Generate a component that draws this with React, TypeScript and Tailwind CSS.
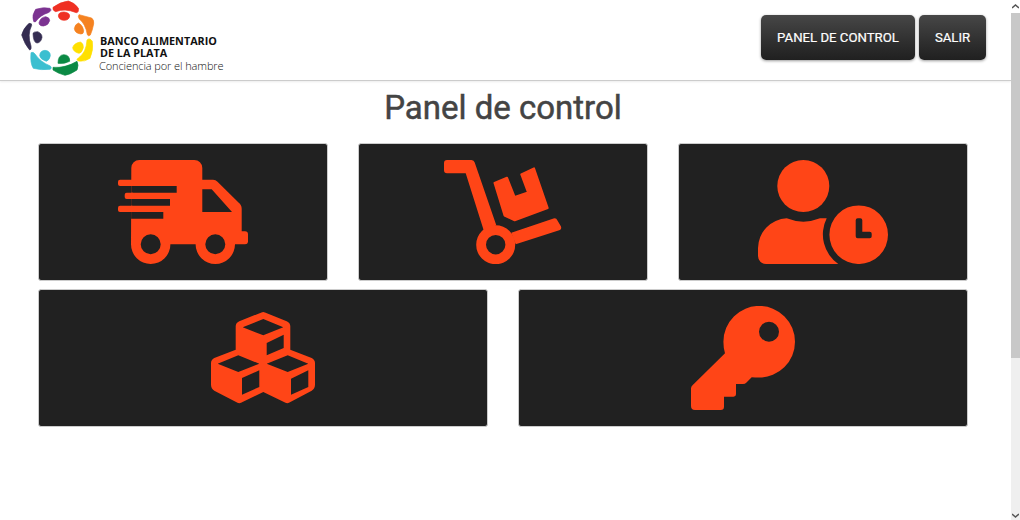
// logotipo: anillo de siete figuras con su punto
const logoShapes = [
  { color: '#ef3023', d: 'M114 22 Q135 6 160 3 Q178 8 190 24 Q192 38 184 38 Q150 24 122 35 Q112 32 114 22Z' },
  { color: '#ef3023', d: 'M130 48 Q130 36 147 36 Q164 38 164 48 Q162 61 147 61 Q132 60 130 48Z' },
  { color: '#f58220', d: 'M192 44 L230 54 Q238 60 236 72 Q232 92 226 105 Q220 110 217 104 Q212 72 192 56 Q188 48 192 44Z' },
  { color: '#f58220', d: 'M178 86 Q180 72 191 69 Q205 78 206 92 Q206 102 198 102 Q180 100 178 86Z' },
  { color: '#ffe000', d: 'M216 120 Q224 112 232 124 Q236 150 225 175 Q210 186 190 183 Q182 178 190 174 Q214 158 216 120Z' },
  { color: '#ffe000', d: 'M173 143 Q176 130 196 126 Q206 130 205 143 Q200 160 192 160 Q175 156 173 143Z' },
  { color: '#0b8a44', d: 'M114 202 Q150 205 186 184 Q192 195 186 210 Q165 224 150 226 Q128 220 114 210Z' },
  { color: '#0b8a44', d: 'M129 190 Q129 165 146 164 Q165 165 164 184 Q147 193 129 190Z' },
  { color: '#3bbfd0', d: 'M48 158 Q55 154 60 162 Q76 186 106 198 Q112 204 106 208 Q76 211 55 205 Q45 190 48 158Z' },
  { color: '#3bbfd0', d: 'M74 167 Q75 152 90 151 Q106 153 106 167 Q104 180 94 184 Q76 178 74 167Z' },
  { color: '#352d52', d: 'M42 70 Q52 70 50 76 Q36 104 48 138 Q50 150 44 150 Q30 135 20 105 Q25 85 42 70Z' },
  { color: '#352d52', d: 'M54 100 Q56 95 68 95 Q81 100 81 112 Q78 128 66 129 Q55 128 54 100Z' },
  { color: '#7c3391', d: 'M55 60 Q50 46 62 28 Q85 20 105 25 Q112 32 100 38 Q76 45 62 65 Q55 68 55 60Z' },
  { color: '#7c3391', d: 'M72 68 Q76 52 92 50 Q104 52 104 62 Q100 76 86 78 Q72 78 72 68Z' },
]

function Logo() {
  return (
    <svg width="85" height="80" viewBox="0 0 255 240" className="shrink-0">
      {logoShapes.map((shape) => (
        <path key={shape.d} fill={shape.color} stroke={shape.color} strokeWidth="2" strokeLinejoin="round" d={shape.d} />
      ))}
    </svg>
  )
}

function TruckIcon() {
  return (
    <svg width="130" height="104" viewBox="0 0 130 104" fill="currentColor">
      <path
        fillRule="evenodd"
        d="M13.3 8a8 8 0 0 1 8-8H76.3a8 8 0 0 1 8 8V19.7H95a6 6 0 0 1 4.5 2L120.5 42.5a8 8 0 0 1 3.2 6.2V71.3H127a3 3 0 0 1 3 3V81a3 3 0 0 1-3 3.3H117A19.7 19.7 0 0 1 77.6 84.3H52.4A19.7 19.7 0 0 1 13 84.3ZM13 26H58.7V32.7H13ZM13 39H52V45.7H13ZM13 52H45.3V58.7H13ZM84.3 29.3H93.7L114 52H84.3ZM42.7 84.3a10 10 0 1 1-20 0a10 10 0 1 1 20 0ZM107.3 84.3a10 10 0 1 1-20 0a10 10 0 1 1 20 0Z"
      />
      <rect x="0" y="19.7" width="16" height="6.3" rx="2" />
      <rect x="6.7" y="32.7" width="10" height="6.3" rx="2" />
      <rect x="0" y="45.7" width="16" height="6.3" rx="2" />
    </svg>
  )
}

function DollyIcon() {
  return (
    <svg width="118" height="104" viewBox="0 0 118 104" fill="currentColor">
      <path d="M3 0H27.5a3.5 3.5 0 0 1 3.2 2.5L52.3 65.3L40 71.3L21.7 13.3H3a3 3 0 0 1-3-3V3a3 3 0 0 1 3-3Z" />
      <path fillRule="evenodd" d="M71.2 84.7a19.5 19.5 0 1 1-39 0a19.5 19.5 0 1 1 39 0ZM61.4 84.7a9.7 9.7 0 1 0-19.4 0a9.7 9.7 0 1 0 19.4 0Z" />
      <path d="M67.3 72.7L109.5 58.5a3 3 0 0 1 3.8 1.8L117 66.5a3 3 0 0 1-1.8 3.8L71.7 84.3Z" />
      <path
        stroke="currentColor"
        strokeWidth="2"
        strokeLinejoin="round"
        d="M50.5 23L63 17.7L70.7 37L84 32.5L77.3 14.3L90 8.3L103.7 48L70.7 60.3L60.5 55.5Z"
      />
    </svg>
  )
}

function UserClockIcon() {
  return (
    <svg width="130" height="104" viewBox="0 0 130 104" fill="currentColor">
      <circle cx="45.3" cy="26" r="26" />
      <path d="M8 104a8 8 0 0 1-8-8V88A30 30 0 0 1 28.7 58.3Q45.3 65 62 58.3H68.7A36 36 0 0 0 80.3 104Z" />
      <path
        fillRule="evenodd"
        d="M130 74.7a29.3 29.3 0 1 1-58.6 0a29.3 29.3 0 1 1 58.6 0ZM99.7 58.3a2 2 0 0 0-2 2V76.3a2 2 0 0 0 2 2H111.7a2 2 0 0 0 2-2V73.7a2 2 0 0 0-2-2H104.3V60.3a2 2 0 0 0-2-2Z"
      />
    </svg>
  )
}

function CubesIcon() {
  return (
    <svg width="104" height="92" viewBox="0 0 104 92" fill="currentColor">
      <path
        fillRule="evenodd"
        d="M50.5 0.4Q52.3 -0.2 54 0.4L75.7 9.3Q79.3 11 79.3 14.3V37.7L100.7 46Q104 48 104 51V72.7Q104 76.5 100.7 78.7L78 90.8Q76.3 91.6 74.5 90.8L52.3 80L30 90.8Q28.3 91.6 26.5 90.8L3.3 78.7Q0 76.5 0 72.7V51Q0 48 3.3 46L24.7 37.7V14.3Q24.7 11 28.3 9.3ZM52.3 7L72.3 15.3L52.3 23.3L31.7 15.3ZM55.7 31L72.7 22.7V36L55.7 43.3ZM27.3 43.3L48.3 51.7L27.3 60L6.7 51.7ZM31 66L48.3 58.3V75L31 82.7ZM76.7 43.3L97.3 51.7L76.7 60L55.7 51.7ZM80 66.7L97.3 58.3V75L80 82.7Z"
      />
    </svg>
  )
}

function KeyIcon() {
  return (
    <svg width="104" height="104" viewBox="0 0 104 104" fill="currentColor">
      <path
        fillRule="evenodd"
        d="M104 35.7a35.8 35.8 0 0 1-35.8 35.8Q64 71.5 60.7 71.3L55.5 76.5Q54 78 52 78H45V88.3Q45 90.7 42.5 90.7H33V100.7Q33 104 29.7 104H4Q0 104 0 100V82.5Q0 80.7 1.5 79.2L34 47.3Q32.4 42 32.4 35.7a35.8 35.8 0 0 1 71.6 0ZM88 25.7a10 10 0 1 0-20 0a10 10 0 1 0 20 0Z"
      />
    </svg>
  )
}

function Card({ children }: { children: React.ReactNode }) {
  return (
    <div className="flex h-[138px] items-center justify-center rounded-[3px] border border-[#ccc] bg-[#212121] text-[#ff4517]">
      {children}
    </div>
  )
}

function NavButton({ label, width }: { label: string; width: string }) {
  return (
    <button
      className={`flex h-[45px] items-center justify-center rounded-[5px] bg-gradient-to-b from-[#474747] to-[#202020] text-[13.2px] font-normal text-white shadow-[0_1px_3px_rgba(0,0,0,0.4)] [-webkit-text-stroke:0.2px_#fff] ${width}`}
    >
      {label}
    </button>
  )
}

export default function App() {
  return (
    <div className="flex h-[520px] w-[1020px] overflow-hidden bg-white font-['Roboto',sans-serif]">
      <div className="w-[1011px]">
        <header className="flex h-[81px] items-start justify-between border-b border-[#ccc] pl-[15px] pr-[25px] shadow-[0_1px_2px_rgba(0,0,0,0.08)]">
          <div className="flex items-start">
            <Logo />
            <div className="mt-[35px] font-['Open_Sans',sans-serif] text-[#111]">
              <p className="text-[10.8px] leading-[12px] font-bold">BANCO ALIMENTARIO</p>
              <p className="text-[10.8px] leading-[12px] font-bold">DE LA PLATA</p>
              <p className="-ml-px text-[11px] leading-[14px] font-light tracking-[-0.1px]">Conciencia por el hambre</p>
            </div>
          </div>
          <nav className="mt-[15px] flex gap-1">
            <NavButton label="PANEL DE CONTROL" width="w-[154px]" />
            <NavButton label="SALIR" width="w-[67px]" />
          </nav>
        </header>

        <main className="ml-[38px] w-[930px]">
          <h1 className="h-[62px] pt-[5px] text-center text-[33px] leading-[44px] font-normal text-[#444] [-webkit-text-stroke:0.5px_#444]">
            Panel de control
          </h1>
          <div className="grid grid-cols-3 gap-x-[30px]">
            <Card><TruckIcon /></Card>
            <Card><DollyIcon /></Card>
            <Card><UserClockIcon /></Card>
          </div>
          <div className="mt-[8px] grid grid-cols-2 gap-x-[30px]">
            <Card><CubesIcon /></Card>
            <Card><KeyIcon /></Card>
          </div>
        </main>
      </div>

      {/* barra de desplazamiento */}
      <div className="flex w-[9px] flex-col items-center bg-[#efefef]">
        <div className="flex h-[358px] w-full flex-col bg-[#c8c8c8]">
          <div className="flex h-[13px] items-center justify-center bg-white">
            <svg width="7" height="5" viewBox="0 0 7 5"><path d="M0 4 L3.5 1 L7 4" fill="none" stroke="#555" strokeWidth="1.5" /></svg>
          </div>
        </div>
        <div className="mt-auto flex h-[10px] items-center justify-center">
          <svg width="7" height="5" viewBox="0 0 7 5"><path d="M0 1 L3.5 4 L7 1" fill="none" stroke="#555" strokeWidth="1.5" /></svg>
        </div>
      </div>
    </div>
  )
}
